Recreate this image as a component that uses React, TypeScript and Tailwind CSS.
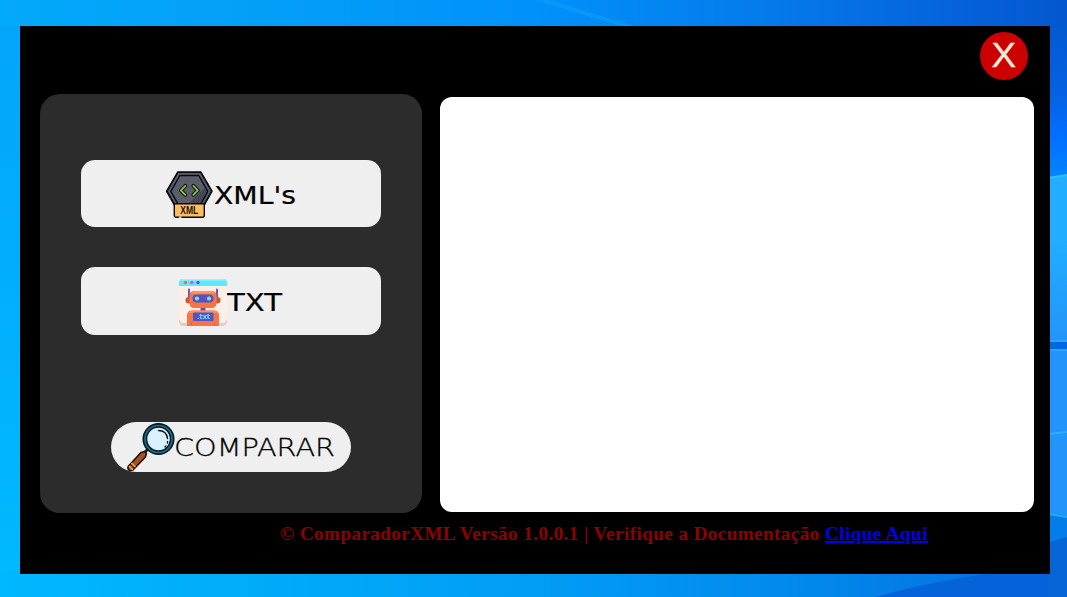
import type { ReactNode } from "react";

function Wallpaper() {
  return (
    <svg className="absolute inset-0 h-full w-full" viewBox="0 0 1067 597" preserveAspectRatio="none" aria-hidden="true">
      <defs>
        <linearGradient id="top" x1="0" x2="1" y1="0" y2="0">
          <stop offset="0" stopColor="#03a9fb" />
          <stop offset=".25" stopColor="#039ff7" />
          <stop offset=".5" stopColor="#0091fa" />
          <stop offset=".72" stopColor="#057aeb" />
          <stop offset=".9" stopColor="#0562da" />
          <stop offset="1" stopColor="#0457ce" />
        </linearGradient>
        <linearGradient id="left" x1="0" x2="0" y1="0" y2="1">
          <stop offset="0" stopColor="#03a5fa" />
          <stop offset="1" stopColor="#00baff" />
        </linearGradient>
        <linearGradient id="bottom" x1="0" x2="1" y1="0" y2="0">
          <stop offset="0" stopColor="#00b8ff" />
          <stop offset=".5" stopColor="#019df5" />
          <stop offset=".78" stopColor="#0286ea" />
          <stop offset="1" stopColor="#0469dc" />
        </linearGradient>
        <linearGradient id="right" x1="0" x2="0" y1="0" y2="1">
          <stop offset="0" stopColor="#0459d2" />
          <stop offset=".12" stopColor="#0561e2" />
          <stop offset=".2" stopColor="#036eff" />
          <stop offset=".3" stopColor="#058cfb" />
        </linearGradient>
        <linearGradient id="pane" x1="0" x2="0" y1="0" y2="1">
          <stop offset="0" stopColor="#22adff" />
          <stop offset=".4" stopColor="#22adff" />
          <stop offset="1" stopColor="#2394fa" />
        </linearGradient>
      </defs>
      <rect width="1067" height="597" fill="url(#top)" />
      <rect y="26" width="30" height="571" fill="url(#left)" />
      <rect y="570" width="1067" height="27" fill="url(#bottom)" />
      <path d="M535 0h14l88 27h-14z" fill="#0aa0ff" opacity=".6" />
      <path d="M875 597Q965 572 1067 566v31z" fill="#0463d8" />
      <rect x="1048" y="26" width="19" height="549" fill="url(#right)" />
      <path d="M1048 178l19-3v166h-19z" fill="url(#pane)" />
      <path d="M1048 178l19-3" stroke="#27c4ff" strokeWidth="2" />
      <path d="M1048 341h19v9h-19z" fill="#0466e2" />
      <path d="M1048 341h19M1048 350h19" stroke="#2ba4ff" strokeWidth="2" />
      <path d="M1048 351h19v165l-19-3z" fill="#2394fa" />
      <path d="M1048 434l19-2" stroke="#28b0ff" strokeWidth="2" />
      <path d="M1048 514l19 3v24l-19 4z" fill="#047de8" />
      <path d="M1048 514l19 3" stroke="#20a9fb" strokeWidth="2" />
      <path d="M1048 543l19-6v60h-19z" fill="#0564d6" />
    </svg>
  );
}

function XmlIcon() {
  return (
    <svg className="size-12 shrink-0" viewBox="0 0 48 48" aria-hidden="true">
      <g transform="translate(.3 -.7)">
        <path d="M12.500 1.800h23L46.500 21 35.500 40.500h-23L1.500 21z" fill="#5d5f6e" stroke="#0a0a0d" strokeWidth="1.800" strokeLinejoin="round" />
        <path d="M14.500 5.200h19L42.500 21l-9 16h-19L5.500 21z" fill="#5b5d6c" stroke="#0a0a0d" strokeWidth="1.500" strokeLinejoin="round" />
        <path d="M39.500 17.500L41.500 21l-8 13.500H22z" fill="#454653" />
        <path d="M20 15.500l-4.500 4.500 4.500 4.500M28 15.500l4.500 4.500-4.500 4.500" fill="none" stroke="#101510" strokeWidth="3.800" strokeLinecap="round" strokeLinejoin="round" />
        <path d="M20 15.500l-4.500 4.500 4.500 4.500M28 15.500l4.500 4.500-4.500 4.500" fill="none" stroke="#8ccb45" strokeWidth="1.700" strokeLinecap="round" strokeLinejoin="round" />
        <path d="M9 33.500h30v11.500a2 2 0 0 1-2 2H11a2 2 0 0 1-2-2z" fill="#ffbd5c" stroke="#0a0a0d" strokeWidth="1.400" />
        <path d="M14 47h2" stroke="#fff" strokeWidth="1.500" />
        <text x="15" y="43.800" fontFamily="Liberation Sans" fontWeight="700" fontSize="10.500" textLength="18" lengthAdjust="spacingAndGlyphs" fill="#17120b">XML</text>
      </g>
    </svg>
  );
}

function TxtIcon() {
  return (
    <svg className="size-12 shrink-0 translate-y-[0.5px]" viewBox="0 0 48 48" aria-hidden="true">
      <rect y=".5" width="48" height="47" rx="3.500" fill="#ffeee6" />
      <path d="M0 44q1 3.500 4 3.500h40q3 0 4-3.500v-3q-2 3.500-5 3.500H5q-3 0-5-3.500z" fill="#e8cdbd" />
      <path d="M0 7.500V4Q0 .5 3.500.5h41Q48 .5 48 4v3.500z" fill="#5ee9ff" />
      <path d="M1 2Q2 .5 4 .5h40q2 0 3 1.500z" fill="#98f2ff" />
      <circle cx="6.500" cy="4" r="1.700" fill="#ff6b3d" /><circle cx="12.800" cy="4" r="1.700" fill="#bd61d9" /><circle cx="19" cy="4" r="1.700" fill="#6055d2" />
      <path d="M10 11v10M38 11v10" stroke="#6259cb" strokeWidth="2" strokeLinecap="round" />
      <rect x="6.500" y="18.500" width="35" height="6.500" rx="3" fill="#c65a3b" />
      <rect x="10.500" y="12.500" width="27" height="17" rx="4.500" fill="#f97445" />
      <path d="M12 15q1-2.500 4-2.500h16q3 0 4 2.500z" fill="#ff976b" />
      <rect x="13.500" y="16" width="21" height="8" rx="4" fill="#5054c4" />
      <circle cx="18" cy="20" r="2.100" fill="#6cecff" /><circle cx="30" cy="20" r="2.100" fill="#6cecff" />
      <path d="M21.500 29.500h5v3h-5z" fill="#4e54bf" />
      <path d="M8 47.500V37q0-5 5-5h22q5 0 5 5v10.500z" fill="#f97445" />
      <path d="M9 34.500q1-2.500 5-2.500h20q4 0 5 2.500z" fill="#ff8e60" />
      <path d="M12.500 43v4.500M35.500 43v4.500" stroke="#e8663f" />
      <rect x="14" y="34" width="20.500" height="8.500" rx="1" fill="#5055c7" />
      <text x="18" y="40.500" fontFamily="DejaVu Sans" fontSize="7" textLength="13" lengthAdjust="spacingAndGlyphs" fill="#70e9fb" stroke="#70e9fb" strokeWidth=".2">.txt</text>
    </svg>
  );
}

function MagnifierIcon() {
  return (
    <svg className="size-12 shrink-0" viewBox="0 0 48 48" aria-hidden="true">
      <path d="M21 26l-4 4" stroke="#111" strokeWidth="2.500" />
      <path d="M14 29.500l4-1 1.500 1.500-1 4-12.500 13q-2 1.500-4 0t-.5-4z" fill="#a75022" stroke="#170f0b" strokeWidth="1.500" strokeLinejoin="round" />
      <path d="M4.500 40l4 4M2 43l4 4" stroke="#f5a332" strokeWidth="1.600" />
      <path d="M3.500 41.500l4 4" stroke="#170f0b" strokeWidth="1" />
      <circle cx="31.500" cy="16" r="15.200" fill="#1b6f8e" stroke="#071820" strokeWidth="1.700" />
      <circle cx="31.500" cy="16" r="12" fill="#d9f1ff" stroke="#071820" strokeWidth="1.500" />
      <path d="M31.500 7.500q8 0 9 8M40.500 18.500v1.500M39 23l-1 1" fill="none" stroke="#111" strokeWidth="1.400" strokeLinecap="round" />
    </svg>
  );
}

function FileButton({ icon, children }: { icon: ReactNode; children: ReactNode }) {
  return (
    <button className="flex w-[300px] items-center justify-center rounded-[14px] bg-[#efefef] pt-0.5 text-black">
      {icon}
      {children}
    </button>
  );
}

export default function App() {
  return (
    <div className="relative h-[597px] w-[1067px] overflow-hidden">
      <Wallpaper />
      <div className="relative pt-[26px] pl-5">
        <main className="flex h-[548px] w-[1030px] flex-col bg-black">
          <header className="flex h-[68px] justify-end pt-1.5 pr-[22px]">
            <button className="flex size-12 items-center justify-center rounded-full bg-[#cc0000] pb-[3px] font-['Liberation_Sans',sans-serif] text-[35px] leading-none text-[#ffebd7]">
              <span className="scale-x-105 [-webkit-text-stroke:0.4px_#ffebd7]">X</span>
            </button>
          </header>
          <div className="flex gap-[18px] pl-5">
            <section className="flex h-[419px] w-[382px] flex-col items-center rounded-[20px] bg-[#2c2c2c] pt-[66px]">
              <div className="grid grid-rows-[67px_68px] gap-10">
                <FileButton icon={<XmlIcon />}>
                  <svg className="h-10 w-[84px] overflow-visible" viewBox="0 0 84 40"><text x="1" y="28.500" fontFamily="DejaVu Sans" fontSize="24" textLength="82" lengthAdjust="spacingAndGlyphs" stroke="#000" strokeWidth=".2">XML's</text></svg>
                </FileButton>
                <FileButton icon={<TxtIcon />}>
                  <svg className="h-10 w-[56px] overflow-visible" viewBox="0 0 56 40"><text x="0" y="29" fontFamily="DejaVu Sans" fontSize="24" textLength="55" lengthAdjust="spacingAndGlyphs" stroke="#000" strokeWidth=".2">TXT</text></svg>
                </FileButton>
              </div>
              <button className="mt-[87px] flex h-[50px] w-60 items-center justify-center rounded-full bg-[#efefef] text-black">
                <MagnifierIcon />
                <svg className="h-8 w-40 overflow-visible" viewBox="0 0 160 32"><text x="-1" y="25" fontFamily="DejaVu Sans" fontWeight="200" fontSize="24" textLength="161" lengthAdjust="spacingAndGlyphs" stroke="#000" strokeWidth=".3">COMPARAR</text></svg>
              </button>
            </section>
            <section className="mt-[3px] h-[415px] w-[594px] rounded-xl bg-white" />
          </div>
          <footer className="pt-2.5 pl-[260px] font-['Liberation_Serif',serif] text-[19px] leading-[22px] font-bold tracking-[0.48px] whitespace-nowrap text-[#8f0000]">
            © ComparadorXML Versão 1.0.0.1 | Verifique a Documentação <a href="#" className="text-[#0000ee] underline decoration-2">Clique Aqui</a>
          </footer>
        </main>
      </div>
    </div>
  );
}
